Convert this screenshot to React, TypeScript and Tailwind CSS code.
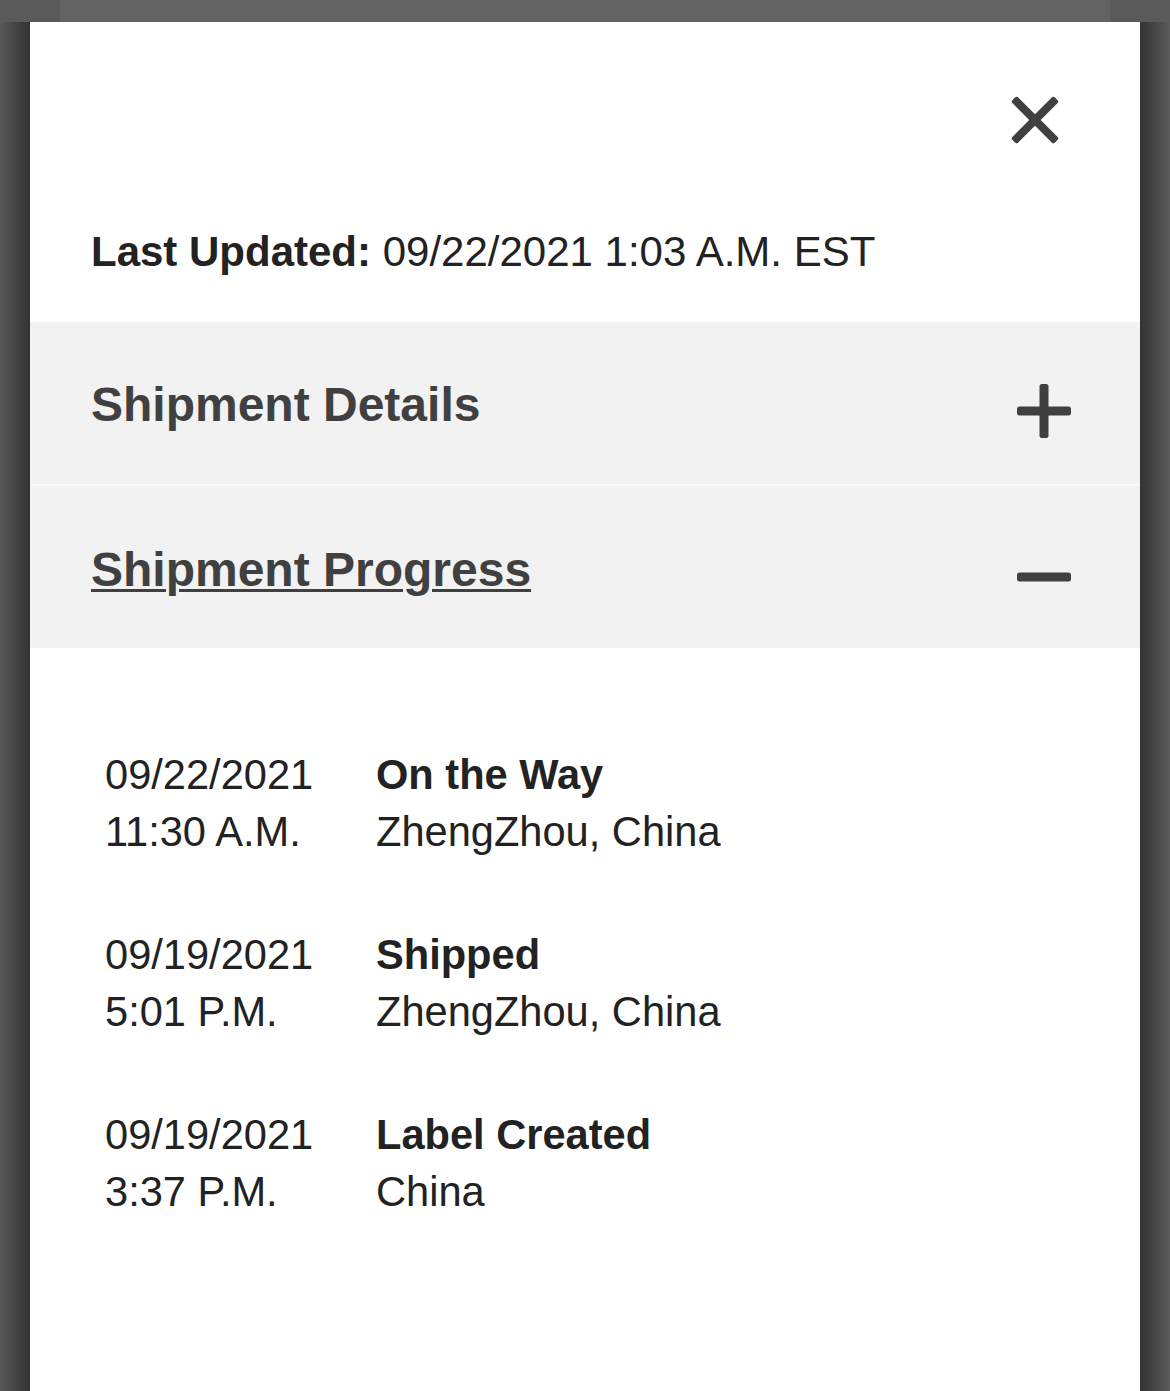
import React from "react";

const entries = [
  { date: "09/22/2021", time: "11:30 A.M.", status: "On the Way", place: "ZhengZhou, China" },
  { date: "09/19/2021", time: "5:01 P.M.", status: "Shipped", place: "ZhengZhou, China" },
  { date: "09/19/2021", time: "3:37 P.M.", status: "Label Created", place: "China" },
];

function CloseIcon() {
  return (
    <svg width="48" height="48" viewBox="0 0 48 48" fill="#404040">
      <rect x="-6" y="20" width="60" height="8" rx="2" transform="rotate(45 24 24)" />
      <rect x="-6" y="20" width="60" height="8" rx="2" transform="rotate(-45 24 24)" />
    </svg>
  );
}

function PlusIcon() {
  return (
    <svg width="54" height="54" viewBox="0 0 54 54" fill="#404040">
      <rect x="0" y="22.5" width="54" height="9" rx="2.5" />
      <rect x="22.5" y="0" width="9" height="54" rx="2.5" />
    </svg>
  );
}

function MinusIcon() {
  return (
    <svg width="54" height="10" viewBox="0 0 54 10" fill="#404040">
      <rect x="0" y="0.5" width="54" height="9" rx="2.5" />
    </svg>
  );
}

export default function App() {
  return (
    <div
      className="min-h-[1391px] h-[1391px] flex flex-col bg-[#5a5a5a] overflow-hidden"
      style={{ fontFamily: '"Liberation Sans", Arial, Helvetica, sans-serif' }}
    >
      <div className="h-[22px] flex shrink-0">
        <div className="w-[60px]" />
        <div className="flex-1 bg-[#636363]" />
        <div className="w-[60px]" />
      </div>
      <div className="flex flex-1 min-h-0">
        <div className="w-[30px] bg-linear-to-r from-[#585858] to-[#333333]" />
        <div className="flex-1 bg-white flex flex-col">
          <div className="h-[300px] flex flex-col">
            <div className="flex justify-end pt-[74px] pr-[81px]">
              <CloseIcon />
            </div>
            <p className="mt-[84px] pl-[61px] text-[42px] leading-[48px] text-[#222222]">
              <span className="font-bold">Last Updated:</span> 09/22/2021 1:03 A.M. EST
            </p>
          </div>
          <div className="bg-[#f2f2f2]">
            <div className="h-[164px] border-b-2 border-[#f8f8f8] flex items-center justify-between pl-[61px] pr-[69px]">
              <span className="text-[48px] leading-[56px] font-bold text-[#404040] mt-[3px]">
                Shipment Details
              </span>
              <span className="mt-[16px]">
                <PlusIcon />
              </span>
            </div>
            <div className="h-[162px] flex items-center justify-between pl-[61px] pr-[69px]">
              <span className="text-[48px] leading-[56px] font-bold text-[#404040] mt-[6px] underline decoration-[3px] underline-offset-[3px]">
                Shipment Progress
              </span>
              <span className="mt-[20px]">
                <MinusIcon />
              </span>
            </div>
          </div>
          <div className="pt-[98px] pl-[75px] flex flex-col gap-[66px] text-[41.6px] leading-[57px] text-[#222222]">
            {entries.map((e, i) => (
              <div key={i} className="grid grid-cols-[271px_1fr]">
                <div>
                  <div>{e.date}</div>
                  <div>{e.time}</div>
                </div>
                <div>
                  <div className="font-bold">{e.status}</div>
                  <div>{e.place}</div>
                </div>
              </div>
            ))}
          </div>
        </div>
        <div className="w-[30px] bg-linear-to-r from-[#333333] to-[#5a5a5a]" />
      </div>
    </div>
  );
}
